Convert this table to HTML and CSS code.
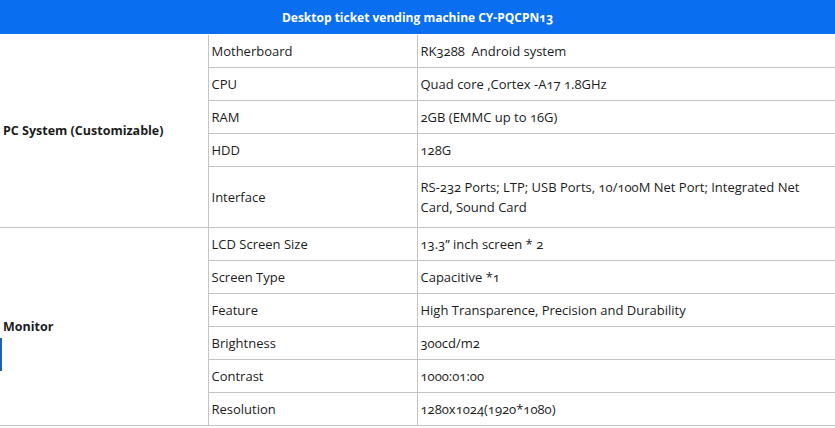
FILE: index.html
```html
<!DOCTYPE html>
<html>
<head>
<meta charset="utf-8">
<link rel="stylesheet" href="styles.css">
</head>
<body>
<table class="spec">
  <colgroup>
    <col class="c1"><col class="c2"><col class="c3">
  </colgroup>
  <tr class="head"><th colspan="3">Desktop ticket vending machine CY-PQCPN13</th></tr>
  <tr>
    <td class="group" rowspan="5">PC System (Customizable)</td>
    <td>Motherboard</td><td>RK3288&nbsp; Android system</td>
  </tr>
  <tr><td>CPU</td><td>Quad core ,Cortex -A17 1.8GHz</td></tr>
  <tr><td>RAM</td><td>2GB (EMMC up to 16G)</td></tr>
  <tr><td>HDD</td><td>128G</td></tr>
  <tr class="tall"><td>Interface</td><td>RS-232 Ports; LTP; USB Ports, 10/100M Net Port; Integrated Net Card, Sound Card</td></tr>
  <tr>
    <td class="group mon" rowspan="6">Monitor</td>
    <td>LCD Screen Size</td><td>13.3” inch screen * 2</td>
  </tr>
  <tr><td>Screen Type</td><td class="edge">Capacitive *1</td></tr>
  <tr><td>Feature</td><td>High Transparence, Precision and Durability</td></tr>
  <tr><td>Brightness</td><td>300cd/m2</td></tr>
  <tr><td>Contrast</td><td>1000:01:00</td></tr>
  <tr><td>Resolution</td><td>1280x1024(1920*1080)</td></tr>
</table>
</body>
</html>
```
FILE: styles.css
```css
html, body {
  margin: 0;
  padding: 0;
  background: #ffffff;
}
body {
  font-family: "Open Sans", "Noto Sans", sans-serif;
  font-size: 13px;
  color: #1c1c1c;
  font-variant-numeric: oldstyle-nums;
}
.spec {
  width: 835px;
  border-collapse: collapse;
  table-layout: fixed;
}
.c1 { width: 208px; }
.c2 { width: 209px; }
.c3 { width: 418px; }
.head th {
  height: 34px;
  padding: 0;
  background: #0a6ef0;
  color: #ffffff;
  font-weight: bold;
  font-size: 12px;
  text-align: center;
  border-bottom: 1px solid #ffffff;
}
.spec td {
  height: 32px;
  padding: 0 3px;
  border: 1px solid #c4c4c4;
  vertical-align: middle;
  line-height: 20px;
}
.spec tr td:last-child { border-right: none; }
.spec td.group {
  border-left: none;
  font-weight: bold;
  font-size: 12.5px;
  position: relative;
}
.tall td { height: 60px; }
.spec td.edge { border-right: 2px solid #2d6b4e; }
.mon::after {
  content: "";
  position: absolute;
  left: 0;
  top: 110px;
  width: 2px;
  height: 33px;
  background: #1f5fb8;
}
```
